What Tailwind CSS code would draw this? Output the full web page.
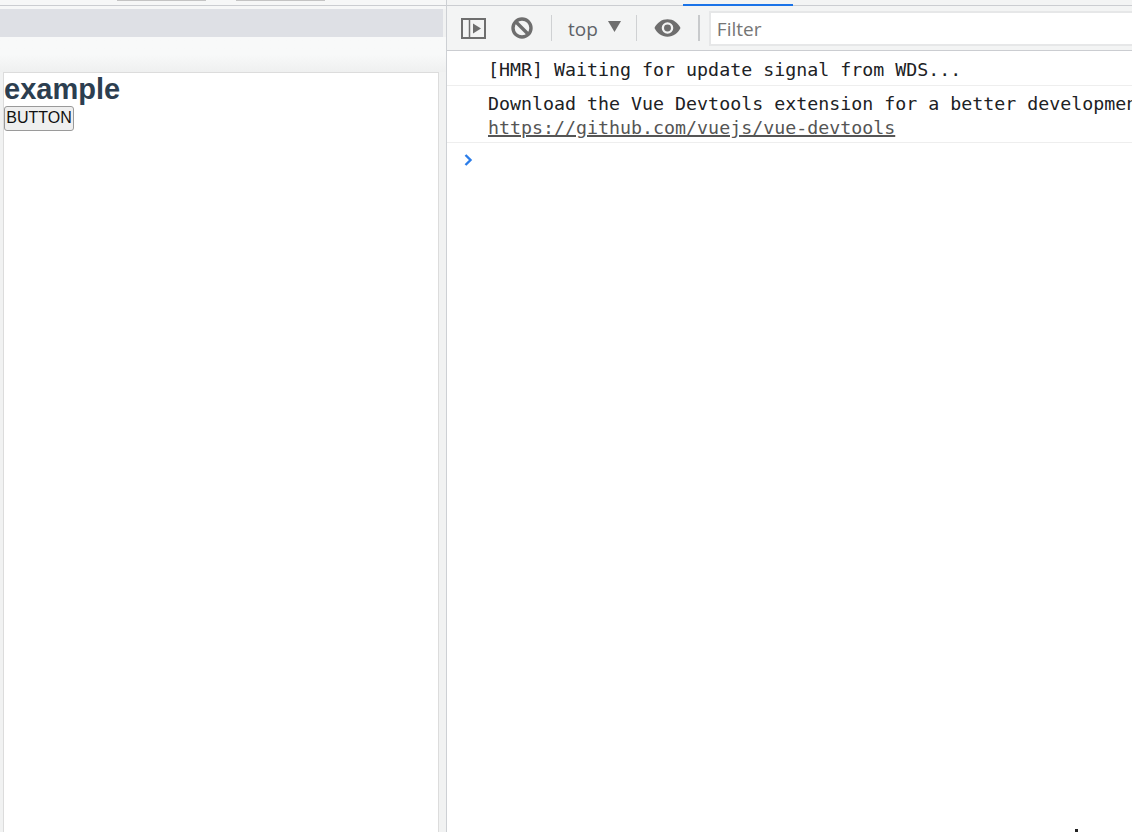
<!DOCTYPE html>
<html lang="en">
<head>
    <meta charset="UTF-8">
    <title>example</title>
    <script src="https://cdn.jsdelivr.net/npm/@tailwindcss/browser@4"></script>
</head>
<body class="w-[1132px] h-[832px] overflow-hidden bg-white flex font-['Liberation_Sans',sans-serif]">

    <!-- page side -->
    <div class="w-[447px] h-full shrink-0 flex flex-col bg-[#f1f2f2] border-r border-[#cdd0d4]">
        <div class="h-[6px] shrink-0 bg-[#f6f7f7] border-b border-[#cbcdd1] flex pl-[117px] gap-[30px]">
            <div class="w-[89px] h-px bg-[#c4c4c4]"></div>
            <div class="w-[89px] h-px bg-[#c4c4c4]"></div>
        </div>
        <div class="h-[3px] shrink-0 bg-[#f6f7f7]"></div>
        <div class="h-[28px] w-[443px] shrink-0 bg-[#dee0e5]"></div>
        <div class="h-[35px] shrink-0 bg-gradient-to-b from-[#f8f9f9] via-[#f8f9f9] to-[#eff0f0]"></div>
        <div class="flex-1 ml-[3px] w-[436px] bg-white border border-[#dcdcdc] border-b-0">
            <h1 class="text-[29px] leading-[32px] font-bold text-[#2c3e50]">example</h1>
            <button class="block h-[25px] w-[70px] mt-px pb-[2px] text-[16px] leading-none text-[#111111] bg-[#efefef] border border-[#9a9a9a] rounded-[3px]">BUTTON</button>
        </div>
    </div>

    <!-- console side -->
    <div class="flex-1 min-w-0 h-full flex flex-col overflow-hidden">
        <div class="h-[6px] shrink-0 bg-[#f3f4f4] border-b border-[#cbcdd1] relative">
            <div class="absolute left-[236px] top-[4px] w-[110px] h-[2px] bg-[#1a73e8]"></div>
        </div>
        <div class="h-[45px] shrink-0 flex items-center bg-[#f3f4f4] border-b border-[#cbcdd1] font-['Open_Sans',sans-serif] text-[#5f6368]">
            <svg class="ml-[14px] w-[25px] h-[21px]" viewBox="0 0 25 21" fill="none">
                <rect x="1" y="1" width="23" height="19" stroke="#6e6e6e" stroke-width="2"/>
                <path d="M8.500 1v19" stroke="#6e6e6e" stroke-width="1.500"/>
                <path d="M12 5.500l8 5-8 5z" fill="#6e6e6e"/>
            </svg>
            <svg class="ml-[25px] w-[22px] h-[22px]" viewBox="0 0 22 22" fill="none">
                <circle cx="11" cy="11" r="9" stroke="#6e6e6e" stroke-width="3.400"/>
                <path d="M4.500 4.500l13 13" stroke="#6e6e6e" stroke-width="3.400"/>
            </svg>
            <div class="ml-[18px] w-px h-[26px] bg-[#cfd1d3]"></div>
            <span class="ml-[16px] mt-[2px] text-[19px] leading-none">top</span>
            <svg class="ml-[10px] -mt-[3px] w-[13px] h-[11px]" viewBox="0 0 13 11"><path d="M0 0h13l-6.500 11z" fill="#6e6e6e"/></svg>
            <div class="ml-[15px] w-px h-[26px] bg-[#cfd1d3]"></div>
            <svg class="ml-[17px] w-[27px] h-[20px]" viewBox="0 0 28 20">
                <path fill-rule="evenodd" d="M14 1C8 1 3 4.600 0.500 10 3 15.400 8 19 14 19s11-3.600 13.500-9C25 4.600 20 1 14 1zm0 15a6 6 0 1 1 0-12 6 6 0 0 1 0 12z" fill="#6e6e6e"/>
                <circle cx="14" cy="10" r="3.600" fill="#6e6e6e"/>
            </svg>
            <div class="ml-[17px] w-[2px] h-[26px] bg-[#c8cacc]"></div>
            <div class="ml-[9px] flex-1 h-[35px] -mb-px bg-white border-l-2 border-t-2 border-b-2 border-[#e6e7e8] flex items-center pl-[6px] pt-[2px] text-[19px] text-[#757575]">Filter</div>
        </div>
        <div class="font-['DejaVu_Sans_Mono',monospace] text-[18.3px] text-[#202124] whitespace-nowrap">
            <div class="h-[35px] pl-[41px] pt-[7px] leading-[24px] border-b border-[#eeeeee]">[HMR] Waiting for update signal from WDS...</div>
            <div class="h-[57px] pl-[41px] pt-[6px] leading-[24px] border-b border-[#eeeeee]">
                <div>Download the Vue Devtools extension for a better developmen</div>
                <a class="block w-fit underline decoration-[1.5px] text-[#555555]">https://github.com/vuejs/vue-devtools</a>
            </div>
            <div class="pl-[17px] pt-[11px]">
                <svg class="w-[9px] h-[12px]" viewBox="0 0 9 12" fill="none"><path d="M1.500 1l5 5-5 5" stroke="#2b7de9" stroke-width="2.400"/></svg>
            </div>
        </div>
    </div>

    <!-- cursor remnant bottom right -->
    <div class="fixed left-[1075px] top-[829px] w-[3px] h-[3px] bg-[#222222]"></div>
</body>
</html>
